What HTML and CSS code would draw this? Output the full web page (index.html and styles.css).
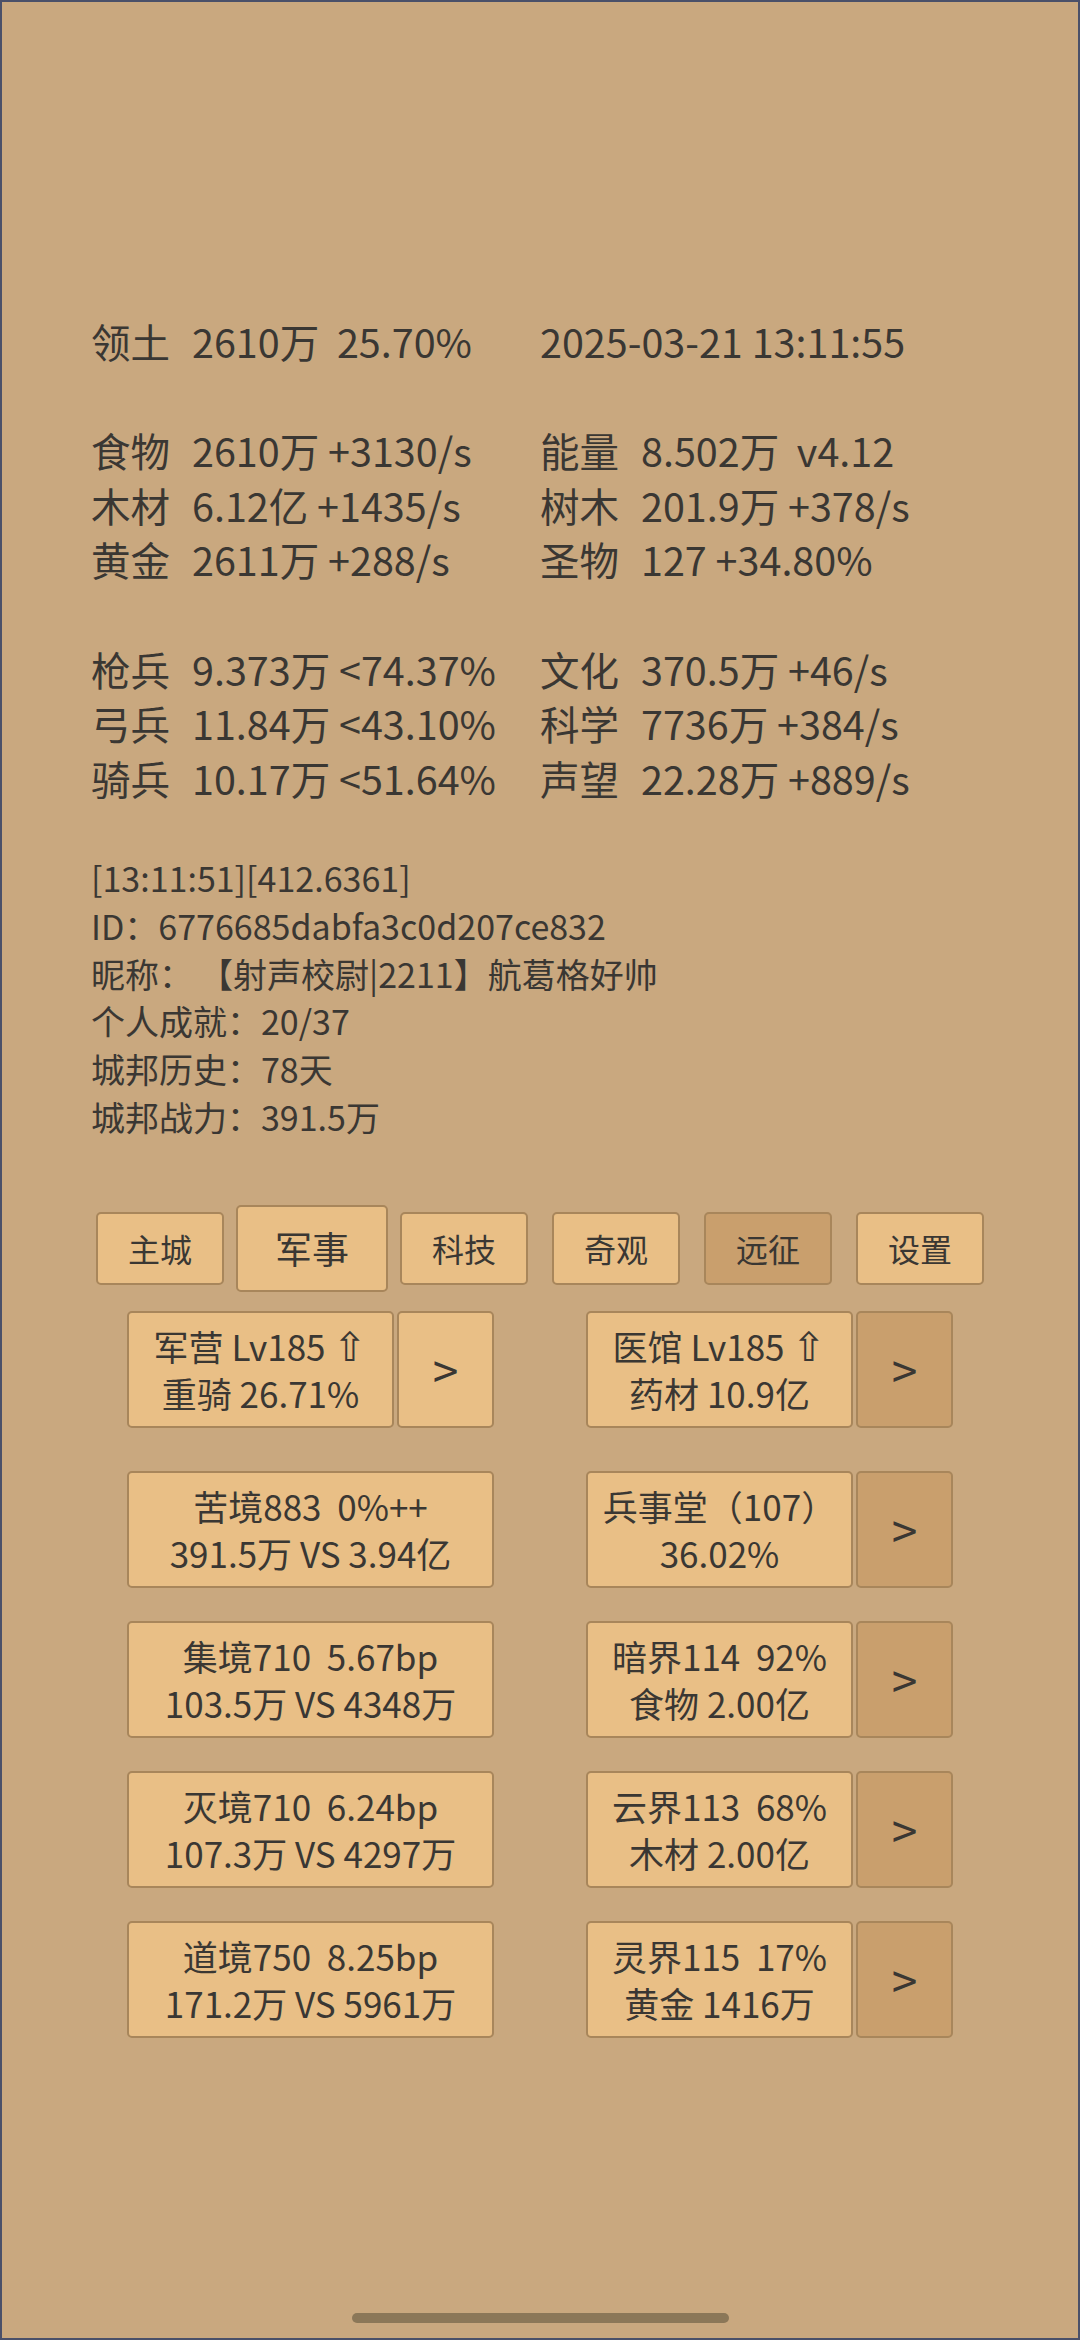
FILE: index.html
```html
<!DOCTYPE html>
<html lang="zh">
<head>
<meta charset="utf-8">
<title>城邦</title>
<link rel="stylesheet" href="styles.css">
</head>
<body>
<div class="screen">
  <div class="stats">
    <div class="group">
      <div class="cell"><span class="lbl">领土</span><span class="val">2610万&nbsp;&nbsp;25.70%</span></div>
      <div class="cell"><span class="val">2025-03-21 13:11:55</span></div>
    </div>
    <div class="group">
      <div class="cell"><span class="lbl">食物</span><span class="val">2610万 +3130/s</span></div>
      <div class="cell"><span class="lbl">能量</span><span class="val">8.502万&nbsp;&nbsp;v4.12</span></div>
      <div class="cell"><span class="lbl">木材</span><span class="val">6.12亿 +1435/s</span></div>
      <div class="cell"><span class="lbl">树木</span><span class="val">201.9万 +378/s</span></div>
      <div class="cell"><span class="lbl">黄金</span><span class="val">2611万 +288/s</span></div>
      <div class="cell"><span class="lbl">圣物</span><span class="val">127 +34.80%</span></div>
    </div>
    <div class="group">
      <div class="cell"><span class="lbl">枪兵</span><span class="val">9.373万 &lt;74.37%</span></div>
      <div class="cell"><span class="lbl">文化</span><span class="val">370.5万 +46/s</span></div>
      <div class="cell"><span class="lbl">弓兵</span><span class="val">11.84万 &lt;43.10%</span></div>
      <div class="cell"><span class="lbl">科学</span><span class="val">7736万 +384/s</span></div>
      <div class="cell"><span class="lbl">骑兵</span><span class="val">10.17万 &lt;51.64%</span></div>
      <div class="cell"><span class="lbl">声望</span><span class="val">22.28万 +889/s</span></div>
    </div>
  </div>

  <div class="info">
    <div>[13:11:51][412.6361]</div>
    <div>ID：6776685dabfa3c0d207ce832</div>
    <div>昵称：<span class="gap"></span>【射声校尉|2211】航葛格好帅</div>
    <div>个人成就：20/37</div>
    <div>城邦历史：78天</div>
    <div>城邦战力：391.5万</div>
  </div>

  <div class="tabs">
    <div class="slot"><div class="tab">主城</div></div>
    <div class="slot"><div class="tab active">军事</div></div>
    <div class="slot"><div class="tab">科技</div></div>
    <div class="slot"><div class="tab">奇观</div></div>
    <div class="slot"><div class="tab dark">远征</div></div>
    <div class="slot"><div class="tab">设置</div></div>
  </div>

  <div class="cards">
    <div class="row first">
      <div class="pair">
        <div class="box"><div class="txt">军营 Lv185 <span class="up">⇧</span><br>重骑 26.71%</div></div>
        <div class="go">&gt;</div>
      </div>
      <div class="pair">
        <div class="box"><div class="txt">医馆 Lv185 <span class="up">⇧</span><br>药材 10.9亿</div></div>
        <div class="go dark">&gt;</div>
      </div>
    </div>
    <div class="row">
      <div class="pair">
        <div class="box full"><div class="txt">苦境883&nbsp;&nbsp;0%++<br>391.5万 VS 3.94亿</div></div>
      </div>
      <div class="pair">
        <div class="box"><div class="txt">兵事堂（107）<br>36.02%</div></div>
        <div class="go dark">&gt;</div>
      </div>
    </div>
    <div class="row">
      <div class="pair">
        <div class="box full"><div class="txt">集境710&nbsp;&nbsp;5.67bp<br>103.5万 VS 4348万</div></div>
      </div>
      <div class="pair">
        <div class="box"><div class="txt">暗界114&nbsp;&nbsp;92%<br>食物 2.00亿</div></div>
        <div class="go dark">&gt;</div>
      </div>
    </div>
    <div class="row">
      <div class="pair">
        <div class="box full"><div class="txt">灭境710&nbsp;&nbsp;6.24bp<br>107.3万 VS 4297万</div></div>
      </div>
      <div class="pair">
        <div class="box"><div class="txt">云界113&nbsp;&nbsp;68%<br>木材 2.00亿</div></div>
        <div class="go dark">&gt;</div>
      </div>
    </div>
    <div class="row">
      <div class="pair">
        <div class="box full"><div class="txt">道境750&nbsp;&nbsp;8.25bp<br>171.2万 VS 5961万</div></div>
      </div>
      <div class="pair">
        <div class="box"><div class="txt">灵界115&nbsp;&nbsp;17%<br>黄金 1416万</div></div>
        <div class="go dark">&gt;</div>
      </div>
    </div>
  </div>

  <div class="home-bar"></div>
</div>
</body>
</html>
```

FILE: styles.css
```css
html, body {
  margin: 0;
  padding: 0;
}

body {
  width: 1080px;
  height: 2340px;
  background: #c9a87f;
}

.screen {
  box-sizing: border-box;
  width: 1080px;
  height: 2340px;
  border: 2px solid #4a5069;
  background: #c9a87f;
  color: #3a3733;
  font-family: "Noto Sans CJK SC", "Noto Sans", sans-serif;
  display: flex;
  flex-direction: column;
}

/* ---------- stats ---------- */
.stats {
  padding-top: 312px;
  padding-left: 89px;
  font-size: 39.5px;
  line-height: 54.6px;
}

.group {
  display: grid;
  grid-template-columns: 449px 1fr;
}

.group + .group {
  margin-top: 54.6px;
}

.cell {
  white-space: nowrap;
}

.lbl {
  display: inline-block;
  width: 101px;
}

/* ---------- info ---------- */
.info {
  margin-top: 48.7px;
  padding-left: 89px;
  font-size: 34px;
  line-height: 47.8px;
  white-space: nowrap;
}

.gap {
  display: inline-block;
  width: 6px;
}

/* ---------- tabs ---------- */
.tabs {
  margin: 64px auto 0;
  width: 912px;
  height: 87px;
  display: flex;
}

.slot {
  flex: 0 0 152px;
  display: flex;
  align-items: center;
  justify-content: center;
}

.tab {
  box-sizing: border-box;
  width: 128px;
  height: 73px;
  display: flex;
  align-items: center;
  justify-content: center;
  background: #e9bf86;
  border: 2px solid #a8865b;
  border-radius: 5px;
  font-size: 32px;
}

.tab.active {
  width: 152px;
  height: 87px;
  font-size: 37px;
}

.tab.dark {
  background: #c99f6d;
}

/* ---------- cards ---------- */
.cards {
  margin-top: 19px;
  display: flex;
  flex-direction: column;
  gap: 33px;
}

.row {
  display: flex;
  justify-content: center;
  gap: 92px;
  height: 117px;
}

.row.first {
  margin-bottom: 10px;
}

.pair {
  width: 367px;
  display: flex;
  gap: 3px;
}

.box {
  box-sizing: border-box;
  width: 267px;
  height: 117px;
  display: flex;
  align-items: center;
  justify-content: center;
  background: #e9bf86;
  border: 2px solid #a8865b;
  border-radius: 5px;
}

.box.full {
  width: 367px;
}

.txt {
  text-align: center;
  font-size: 35px;
  line-height: 47.8px;
  white-space: nowrap;
}

.up {
  font-family: "DejaVu Sans", sans-serif;
  font-size: 40px;
  line-height: 40px;
  font-weight: 300;
}

.go {
  box-sizing: border-box;
  width: 97px;
  height: 117px;
  display: flex;
  align-items: center;
  justify-content: center;
  background: #e9bf86;
  border: 2px solid #a8865b;
  border-radius: 5px;
  font-size: 46px;
}

.go.dark {
  background: #c99f6d;
}

/* ---------- home indicator ---------- */
.home-bar {
  margin: auto auto 15px;
  width: 377px;
  height: 10px;
  border-radius: 5px;
  background: #8b7758;
}
```
